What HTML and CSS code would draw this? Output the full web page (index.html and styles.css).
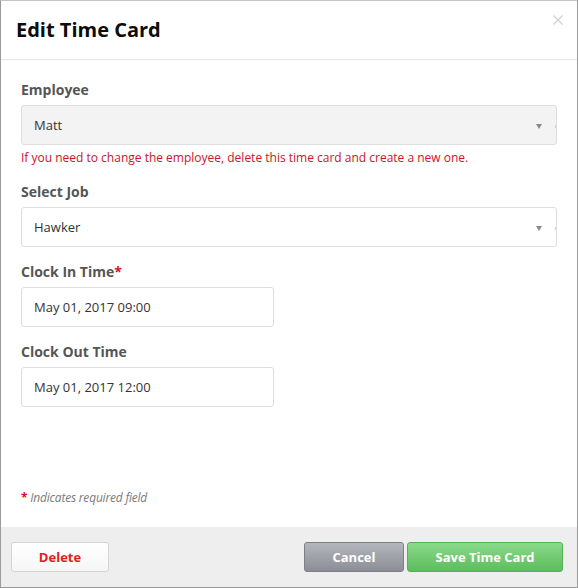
FILE: index.html
```html
<!DOCTYPE html>
<html>
<head>
<meta charset="utf-8">
<link rel="stylesheet" href="styles.css">
</head>
<body>
<div class="modal">
  <div class="modal-header">
    <h1 class="title">Edit Time Card</h1>
    <span class="close" aria-label="Close">
      <svg width="10" height="10" viewBox="0 0 10 10"><path d="M0.5 0.5L9.5 9.5M9.5 0.5L0.5 9.5" stroke="#cfcfcf" stroke-width="1.2" fill="none"/></svg>
    </span>
  </div>
  <div class="modal-body">
    <div class="group">
      <div class="label">Employee</div>
      <div class="field select disabled">Matt<span class="arrow"></span></div>
      <div class="help">If you need to change the employee, delete this time card and create a new one.</div>
    </div>
    <div class="group">
      <div class="label">Select Job</div>
      <div class="field select">Hawker<span class="arrow"></span></div>
    </div>
    <div class="group">
      <div class="label">Clock In Time<span class="req">*</span></div>
      <div class="field short">May 01, 2017 09:00</div>
    </div>
    <div class="group">
      <div class="label">Clock Out Time</div>
      <div class="field short">May 01, 2017 12:00</div>
    </div>
    <div class="note"><span class="req strong">*</span> Indicates required field</div>
  </div>
  <div class="modal-footer">
    <button class="btn btn-delete">Delete</button>
    <div class="right-btns">
      <button class="btn btn-cancel">Cancel</button>
      <button class="btn btn-save">Save Time Card</button>
    </div>
  </div>
</div>
</body>
</html>
```

FILE: styles.css
```css
* { box-sizing: border-box; }
html, body { margin: 0; padding: 0; background: #fff; }
body { font-family: "Open Sans", "Liberation Sans", sans-serif; }

.modal {
  width: 578px;
  height: 588px;
  border: 1px solid #9a9a9a;
  border-top-color: #c4c4c4;
  display: flex;
  flex-direction: column;
  background: #fff;
}

.modal-header {
  height: 59px;
  border-bottom: 1px solid #e6e6e6;
  display: flex;
  align-items: center;
  justify-content: space-between;
  padding: 0 10px 0 15px;
  position: relative;
}
.title {
  margin: 0;
  font-size: 20px;
  line-height: 28px;
  font-weight: 700;
  color: #0c0c0c;
}
.close {
  position: absolute;
  right: 14px;
  top: 14px;
  width: 10px;
  height: 10px;
  display: block;
}
.close svg { display: block; }

.modal-body {
  flex: 1;
  padding: 20px 20px 20px 20px;
  display: flex;
  flex-direction: column;
}
.group { margin-bottom: 15px; }
.label {
  font-size: 14px;
  line-height: 20px;
  font-weight: 700;
  color: #555;
  margin-bottom: 5px;
}
.req { color: #d0112b; }
.strong { font-weight: 700; font-style: normal; }
.field {
  height: 40px;
  border: 1px solid #dedede;
  border-radius: 3px;
  padding: 0 12px;
  display: flex;
  align-items: center;
  font-size: 13px;
  color: #333;
  background: #fff;
  position: relative;
}
.select.disabled { background: #f3f3f3; }
.short { width: 253px; }
.arrow {
  position: absolute;
  right: 14px;
  top: 18px;
  width: 0;
  height: 0;
  border-left: 3px solid transparent;
  border-right: 3px solid transparent;
  border-top: 5px solid #8a8a8a;
}
.select::after {
  content: "";
  position: absolute;
  right: 0px;
  top: 19px;
  width: 1px;
  height: 3px;
  background: #cfcfcf;
}
.help {
  margin-top: 4px;
  font-size: 12px;
  line-height: 18px;
  color: #d0112b;
}
.note {
  margin-top: auto;
  font-size: 12px;
  line-height: 18px;
  font-style: italic;
  color: #7a7a7a;
  letter-spacing: -0.2px;
}

.modal-footer {
  height: 60px;
  background: #eeeeee;
  padding: 15px 14px 0 10px;
  display: flex;
  justify-content: space-between;
  align-items: flex-start;
}
.right-btns { display: flex; gap: 3px; }
.btn {
  height: 30px;
  border-radius: 3px;
  font-family: "Open Sans", "Liberation Sans", sans-serif;
  font-size: 13px;
  font-weight: 700;
  padding: 0;
  cursor: pointer;
}
.btn-delete {
  width: 98px;
  background: linear-gradient(#ffffff, #f6f6f6);
  border: 1px solid #d4d4d4;
  color: #e3201f;
}
.btn-cancel {
  width: 100px;
  background: linear-gradient(#b3b6bd, #8b8e95);
  border: 1px solid #7c7f85;
  color: #fff;
}
.btn-save {
  width: 156px;
  background: linear-gradient(#8ad98a, #5cbd5c);
  border: 1px solid #56b056;
  color: #fff;
}
```
